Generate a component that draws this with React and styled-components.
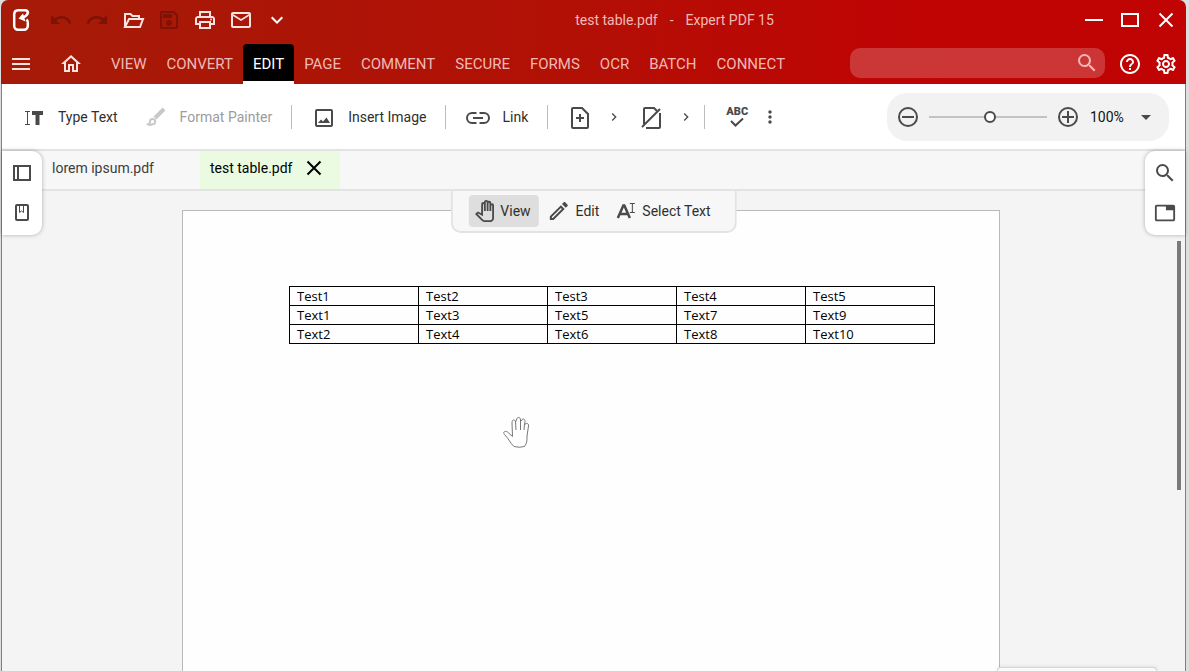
import React, { useState } from 'react';
import styled, { createGlobalStyle, ThemeProvider } from 'styled-components';
import {
    MdMenu,
    MdUndo,
    MdRedo,
    MdOutlineSave,
    MdOutlinePrint,
    MdMailOutline,
    MdExpandMore,
    MdSearch,
    MdHelpOutline,
    MdOutlineSettings,
    MdMoreVert,
    MdChevronRight,
    MdArrowDropDown,
    MdOutlinePanTool,
    MdOutlineEdit,
    MdOutlineTab,
} from 'react-icons/md';

const theme = {
    text: '#2f2f2f',
    icon: '#4a4a4a',
    disabled: '#9c9c9c',
    line: '#e3e3e3',
    bar: '#f7f7f7',
    canvas: '#f4f4f4',
    tabActive: '#eafbe1',
    headerText: '#f0b9b5',
    headerIcon: '#fbe3e1',
};

const GlobalStyle = createGlobalStyle`
  * {
    box-sizing: border-box;
  }

  body {
    margin: 0;
    background: #dedede;
    font-family: Roboto, sans-serif;
    font-size: 14px;
    color: ${props => props.theme.text};
  }

  button, input, select {
    font: inherit;
    color: inherit;
    margin: 0;
    padding: 0;
    border: none;
    background: none;
  }

  svg {
    display: block;
    flex: none;
  }
`;

const Window = styled.div`
  display: flex;
  flex-direction: column;
  min-height: 100vh;
  margin: 0 3px 0 1px;
`;

const Header = styled.header`
  background: linear-gradient(90deg, #a51b08 0%, #b30f05 50%, #bf0404 75%, #c00303 100%);
  border-radius: 7px 7px 0 0;
  color: ${props => props.theme.headerText};
`;

const TitleBar = styled.div`
  display: flex;
  align-items: center;
  height: 40px;
  padding: 0 2px 0 11px;
`;

const QuickActions = styled.div`
  display: flex;
  gap: 12px;
  margin-left: 19px;
`;

const IconButton = styled.button`
  display: flex;
  align-items: center;
  justify-content: center;
  width: ${props => props.$width || 24}px;
  height: 24px;
  color: ${props => props.$color || props.theme.icon};
`;

const Title = styled.h1`
  display: flex;
  flex: 1;
  justify-content: center;
  gap: 12px;
  margin: 0;
  padding-right: 16px;
  font-size: 14px;
  line-height: 20px;
  font-weight: 400;
`;

const WindowControls = styled.div`
  display: flex;
`;

const MenuBar = styled.nav`
  display: flex;
  align-items: center;
  height: 44px;
  padding: 4px 8px 0;
`;

const MenuTabs = styled.div`
  display: flex;
  margin-left: 4px;
`;

const MenuTab = styled.button`
  height: 40px;
  padding: 2px 10px 0;
  font-size: 15px;
  border-bottom: 3px solid ${props => (props.$active ? '#fff' : 'transparent')};
  border-radius: 4px 4px 0 0;
  color: ${props => (props.$active ? '#fff' : 'inherit')};
  background: ${props => (props.$active ? '#000' : 'none')};
  background-clip: padding-box;
`;

const SearchBox = styled.label`
  display: flex;
  align-items: center;
  width: 255px;
  height: 30px;
  margin: 0 13px 2px auto;
  padding: 0 6px 0 12px;
  border-radius: 10px;
  background: rgba(255, 255, 255, 0.2);

  input {
    flex: 1;
    min-width: 0;
    outline: none;
  }
`;

const HeaderIcons = styled.div`
  display: flex;
  gap: 12px;
`;

const Body = styled.div`
  display: flex;
  flex: 1;
  flex-direction: column;
  border: 1px solid #808080;
  border-width: 0 1px;
`;

const Toolbar = styled.div`
  display: flex;
  align-items: center;
  height: 67px;
  padding: 0 16px 0 20px;
  border-bottom: 2px solid ${props => props.theme.line};
  background: #fff;
`;

const ToolButton = styled.button`
  display: flex;
  align-items: center;
  gap: 12px;
  height: 32px;
  margin-right: ${props => (props.$last ? 19 : 26)}px;
  color: ${props => props.theme.text};
  white-space: nowrap;

  svg {
    color: ${props => props.theme.icon};
  }

  &:disabled {
    color: ${props => props.theme.disabled};
  }

  &:disabled svg {
    color: #c8c8c8;
  }
`;

const Divider = styled.span`
  width: 1px;
  height: 24px;
  margin-right: 20px;
  background: #bdbdbd;
`;

const PageTools = styled.div`
  display: flex;
  gap: 16px;
  margin-right: 8px;
`;

const SplitButton = styled.div`
  display: flex;
  gap: 12px;
`;

const SpellCheck = styled.button`
  display: flex;
  flex-direction: column;
  align-items: center;
  width: 24px;
  margin-right: 9px;
  font-size: 11px;
  line-height: 11px;
  font-weight: 900;
  color: ${props => props.theme.icon};
`;

const ZoomBar = styled.div`
  display: flex;
  align-items: center;
  height: 48px;
  margin-left: auto;
  padding: 0 11px 0 9px;
  border-radius: 20px;
  background: #f2f2f2;
`;

const ZoomSlider = styled.input.attrs({ type: 'range' })`
  appearance: none;
  width: 118px;
  height: 12px;
  margin: 0 9px;

  &::-webkit-slider-runnable-track {
    height: 2px;
    background: #c3c3c3;
  }

  &::-webkit-slider-thumb {
    appearance: none;
    width: 12px;
    height: 12px;
    margin-top: -5px;
    border: 2px solid #4a4a4a;
    border-radius: 50%;
    background: #fff;
  }
`;

const ZoomLevel = styled.label`
  display: flex;
  align-items: center;
  margin-left: 10px;
  color: #111;

  select {
    appearance: none;
    width: 44px;
    outline: none;
  }
`;

const Workspace = styled.main`
  position: relative;
  display: flex;
  flex: 1;
  flex-direction: column;
  background: ${props => props.theme.canvas};
`;

const FileTabs = styled.div`
  display: flex;
  height: 40px;
  padding-left: 40px;
  border-bottom: 2px solid ${props => props.theme.line};
  background: ${props => props.theme.bar};
`;

const FileTab = styled.div`
  display: flex;
  align-items: center;
  gap: 12px;
  min-width: ${props => (props.$active ? 140 : 158)}px;
  padding: 0 0 4px 10px;
  color: ${props => (props.$active ? '#000' : '#3d3d3d')};
  background: ${props => (props.$active ? props.theme.tabActive : 'none')};
`;

// Panels docked over the left and right edge of the document
const Dock = styled.aside`
  position: absolute;
  top: 0;
  ${props => props.$side}: 0;
  display: flex;
  flex-direction: column;
  align-items: center;
  gap: 16px;
  width: 40px;
  padding: 10px 0;
  border-radius: ${props => (props.$side === 'left' ? '0 10px 10px 0' : '10px 0 0 10px')};
  background: #fff;
  box-shadow: 0 0 4px rgba(0, 0, 0, 0.3);
`;

const Canvas = styled.div`
  position: relative;
  display: flex;
  flex: 1;
  justify-content: center;
  padding: 19px 5px 0 0;
`;

const ModeBar = styled.div`
  position: absolute;
  top: 0;
  left: 50%;
  transform: translateX(-50%);
  display: flex;
  gap: 3px;
  padding: 4px 16px;
  border: 2px solid ${props => props.theme.line};
  border-top: none;
  border-radius: 0 0 10px 10px;
  background: ${props => props.theme.bar};
`;

const ModeButton = styled.button`
  display: flex;
  align-items: center;
  gap: 5px;
  height: 32px;
  padding: 0 8px 0 5px;
  border-radius: 4px;
  white-space: nowrap;
  background: ${props => (props.$active ? '#dedede' : 'none')};

  svg {
    color: ${props => props.theme.icon};
  }
`;

const Page = styled.article`
  position: relative;
  width: 818px;
  padding: 75px 64px 0 106px;
  border: 1px solid #b9b9b9;
  border-bottom: none;
  background: #fefefe;
`;

const DocTable = styled.table`
  width: 100%;
  table-layout: fixed;
  border-collapse: collapse;
  font-family: 'Open Sans', sans-serif;
  font-size: 13px;
  line-height: 18px;
  color: #000;

  td {
    padding: 0 7px;
    border: 1px solid #000;
  }
`;

const HandCursor = styled.svg`
  position: absolute;
  top: 205px;
  left: 319px;
`;

const ScrollThumb = styled.div`
  position: absolute;
  top: 50px;
  right: 4px;
  width: 4px;
  height: 249px;
  background: #7a7a7a;
`;

const BottomPanel = styled.div`
  position: absolute;
  right: 28px;
  bottom: 0;
  width: 160px;
  height: 4px;
  border: 1px solid #d6d6d6;
  border-bottom: none;
  border-radius: 8px 8px 0 0;
  background: #fafafa;
  box-shadow: 0 0 4px rgba(0, 0, 0, 0.12);
`;

const Logo = () => (
    <svg width="18" height="24" viewBox="0 0 18 24" fill="none" stroke="#fff" strokeWidth="2.5">
        <path d="M16 5.5V5A3 3 0 0 0 13 2.2H6A4 4 0 0 0 2.2 6V17.800A4 4 0 0 0 6 21.800H12A4 4 0 0 0 15.800 17.800V14.500Q15.800 12.500 14.500 11.500" />
        <path d="M16 5Q14.500 8.500 10.500 9.500" strokeWidth="2.5" />
        <path d="M6.500 10.500L11 5.500L13.500 13.500Z" fill="#fff" stroke="none" />
    </svg>
);

const FolderIcon = () => (
    <svg width="24" height="24" viewBox="0 0 24 24" fill="none" stroke="currentColor" strokeWidth="2">
        <path d="M4 19V6H9.500L11.500 8H18V11" />
        <path d="M4 19L8 11H22L19 19Z" />
    </svg>
);

const HomeIcon = () => (
    <svg width="24" height="24" viewBox="0 0 24 24" fill="currentColor">
        <path d="M12 5.7L17 10.2V18H15V12H9V18H7V10.2L12 5.7M12 3L2 12H5V20H11V14H13V20H19V12H22Z" />
    </svg>
);

const MinimizeIcon = () => (
    <svg width="18" height="18" viewBox="0 0 18 18" stroke="#fff" strokeWidth="2">
        <path d="M0 9H18" />
    </svg>
);

const MaximizeIcon = () => (
    <svg width="18" height="18" viewBox="0 0 18 18" fill="none" stroke="#fff" strokeWidth="2">
        <path d="M1 3H17V15H1Z" />
    </svg>
);

const CloseIcon = () => (
    <svg width="18" height="18" viewBox="0 0 18 18" fill="none" stroke="currentColor" strokeWidth="2">
        <path d="M2.500 2.500L15.500 15.500M15.500 2.500L2.500 15.500" />
    </svg>
);

const TypeTextIcon = () => (
    <svg width="24" height="24" viewBox="0 0 24 24" fill="none" stroke="currentColor">
        <path d="M3 6.500H8M5.500 6.500V19.500M3 19.500H8" />
        <path d="M10 8H21M15.500 8V20" strokeWidth="4" />
    </svg>
);

const PainterIcon = () => (
    <svg width="24" height="24" viewBox="0 0 24 24" fill="none" stroke="currentColor">
        <path d="M11 13L20 4" strokeWidth="4" />
        <path d="M4 19.500Q6 19 6 16.500A2.600 2.600 0 1 1 8.500 19.200Q6 20.800 4 19.500Z" strokeWidth="2" />
    </svg>
);

const ImageIcon = () => (
    <svg width="24" height="24" viewBox="0 0 24 24" fill="none" stroke="currentColor" strokeWidth="2">
        <rect x="4" y="5" width="16" height="16" rx="1" />
        <path d="M6 18L9 14.500L11 16.500L14.500 12.500L18 18Z" fill="currentColor" stroke="none" />
    </svg>
);

const LinkIcon = () => (
    <svg width="24" height="24" viewBox="0 0 24 24" fill="none" stroke="currentColor" strokeWidth="2">
        <path d="M10.500 8H6A5 5 0 0 0 6 18H10.500M13.500 8H18A5 5 0 0 1 18 18H13.500M7 13H17" />
    </svg>
);

const AddPageIcon = () => (
    <svg width="24" height="24" viewBox="0 0 24 24" fill="none" stroke="currentColor" strokeWidth="2">
        <path d="M5 3H14L20 9V22A1 1 0 0 1 19 23H5A1 1 0 0 1 4 22V4A1 1 0 0 1 5 3Z" />
        <path d="M12 9V17M8 13H16" />
    </svg>
);

const NoPageIcon = () => (
    <svg width="24" height="24" viewBox="0 0 24 24" fill="none" stroke="currentColor" strokeWidth="2">
        <path d="M4 19V4A1 1 0 0 1 5 3H14L17 6M20 8V22A1 1 0 0 1 19 23H6" />
        <path d="M2 22L20 4" />
    </svg>
);

const MinusIcon = () => (
    <svg width="24" height="24" viewBox="0 0 24 24" fill="none" stroke="currentColor" strokeWidth="2">
        <circle cx="12" cy="12" r="9" />
        <path d="M6 12H18" />
    </svg>
);

const PlusIcon = () => (
    <svg width="24" height="24" viewBox="0 0 24 24" fill="none" stroke="currentColor" strokeWidth="2">
        <circle cx="12" cy="12" r="9" />
        <path d="M6 12H18M12 6V18" />
    </svg>
);

const PanelIcon = () => (
    <svg width="18" height="18" viewBox="0 0 18 18" fill="none" stroke="currentColor" strokeWidth="2">
        <path d="M1 2H17V16H1ZM5 2V16" />
    </svg>
);

const BookmarkIcon = () => (
    <svg width="18" height="18" viewBox="0 0 18 18" fill="none" stroke="currentColor" strokeWidth="2">
        <rect x="3" y="1" width="12" height="15" rx="1" />
        <path d="M6.500 2V8.500L8.500 7L10.500 8.500V2" strokeWidth="1" />
    </svg>
);

const SelectTextIcon = () => (
    <svg width="22" height="20" viewBox="-1 0 22 20" fill="none" stroke="currentColor">
        <path d="M2 17L7.500 4.500H8.500L14 17M4 13H12" strokeWidth="2.500" />
        <path d="M14 2.500H19M16.500 2.500V11.500M14 11.500H19" />
    </svg>
);

const menus = ['VIEW', 'CONVERT', 'EDIT', 'PAGE', 'COMMENT', 'SECURE', 'FORMS', 'OCR', 'BATCH', 'CONNECT'];

const rows = [
    ['Test1', 'Test2', 'Test3', 'Test4', 'Test5'],
    ['Text1', 'Text3', 'Text5', 'Text7', 'Text9'],
    ['Text2', 'Text4', 'Text6', 'Text8', 'Text10'],
];

const App = () => {
    const [menu, setMenu] = useState('EDIT');
    const [mode, setMode] = useState('View');
    const [zoom, setZoom] = useState(52);

    return (
        <ThemeProvider theme={theme}>
            <GlobalStyle />
            <Window>
                <Header>
                    <TitleBar>
                        <Logo />
                        <QuickActions>
                            <IconButton $color="#7d1206" aria-label="Undo"><MdUndo size={24} /></IconButton>
                            <IconButton $color="#7d1206" aria-label="Redo"><MdRedo size={24} /></IconButton>
                            <IconButton $color={theme.headerIcon} aria-label="Open"><FolderIcon /></IconButton>
                            <IconButton $color="#7d1206" aria-label="Save"><MdOutlineSave size={24} /></IconButton>
                            <IconButton $color={theme.headerIcon} aria-label="Print"><MdOutlinePrint size={24} /></IconButton>
                            <IconButton $color={theme.headerIcon} aria-label="Mail"><MdMailOutline size={24} /></IconButton>
                            <IconButton $color="#fff" aria-label="More actions"><MdExpandMore size={24} /></IconButton>
                        </QuickActions>
                        <Title>
                            <span>test table.pdf</span>
                            <span>-</span>
                            <span>Expert PDF 15</span>
                        </Title>
                        <WindowControls>
                            <IconButton $width={36} $color="#fff" aria-label="Minimize"><MinimizeIcon /></IconButton>
                            <IconButton $width={36} $color="#fff" aria-label="Maximize"><MaximizeIcon /></IconButton>
                            <IconButton $width={36} $color="#fff" aria-label="Close"><CloseIcon /></IconButton>
                        </WindowControls>
                    </TitleBar>
                    <MenuBar>
                        <HeaderIcons>
                            <IconButton $color={theme.headerIcon} aria-label="Menu"><MdMenu size={24} /></IconButton>
                            <IconButton $width={52} $color={theme.headerIcon} aria-label="Home"><HomeIcon /></IconButton>
                        </HeaderIcons>
                        <MenuTabs>
                            {menus.map(name => (
                                <MenuTab key={name} $active={menu === name} onClick={() => setMenu(name)}>
                                    {name}
                                </MenuTab>
                            ))}
                        </MenuTabs>
                        <SearchBox>
                            <input type="text" aria-label="Search" />
                            <MdSearch size={24} color={theme.headerText} />
                        </SearchBox>
                        <HeaderIcons>
                            <IconButton $color="#fff" aria-label="Help"><MdHelpOutline size={24} /></IconButton>
                            <IconButton $color="#fff" aria-label="Settings"><MdOutlineSettings size={24} /></IconButton>
                        </HeaderIcons>
                    </MenuBar>
                </Header>

                <Body>
                    <Toolbar>
                        <ToolButton><TypeTextIcon />Type Text</ToolButton>
                        <ToolButton disabled $last><PainterIcon />Format Painter</ToolButton>
                        <Divider />
                        <ToolButton $last><ImageIcon />Insert Image</ToolButton>
                        <Divider />
                        <ToolButton $last><LinkIcon />Link</ToolButton>
                        <Divider />
                        <PageTools>
                            <SplitButton>
                                <IconButton aria-label="Add page"><AddPageIcon /></IconButton>
                                <IconButton $width={20} aria-label="Add page options"><MdChevronRight size={16} /></IconButton>
                            </SplitButton>
                            <SplitButton>
                                <IconButton aria-label="Remove page"><NoPageIcon /></IconButton>
                                <IconButton $width={20} aria-label="Remove page options"><MdChevronRight size={16} /></IconButton>
                            </SplitButton>
                        </PageTools>
                        <Divider />
                        <SpellCheck>
                            ABC
                            <svg width="16" height="10" viewBox="0 0 16 10" fill="none" stroke="currentColor" strokeWidth="2">
                                <path d="M2 4L6.500 8.500L14 1.500" />
                            </svg>
                        </SpellCheck>
                        <IconButton aria-label="More tools"><MdMoreVert size={20} /></IconButton>
                        <ZoomBar>
                            <IconButton aria-label="Zoom out"><MinusIcon /></IconButton>
                            <ZoomSlider aria-label="Zoom" value={zoom} onChange={e => setZoom(e.target.value)} />
                            <IconButton aria-label="Zoom in"><PlusIcon /></IconButton>
                            <ZoomLevel>
                                <select aria-label="Zoom level" defaultValue="100%">
                                    <option>100%</option>
                                </select>
                                <MdArrowDropDown size={24} color={theme.icon} />
                            </ZoomLevel>
                        </ZoomBar>
                    </Toolbar>

                    <Workspace>
                        <FileTabs>
                            <FileTab>lorem ipsum.pdf</FileTab>
                            <FileTab $active>
                                test table.pdf
                                <IconButton $width={20} $color="#000" aria-label="Close tab"><CloseIcon /></IconButton>
                            </FileTab>
                        </FileTabs>
                        <Canvas>
                            <Page>
                                <DocTable>
                                    <tbody>
                                        {rows.map(row => (
                                            <tr key={row[0]}>
                                                {row.map(cell => <td key={cell}>{cell}</td>)}
                                            </tr>
                                        ))}
                                    </tbody>
                                </DocTable>
                                <HandCursor width="30" height="32" viewBox="0 0 30 32" fill="#fff" stroke="#777">
                                    <path d="M12 30.500C8 27 7 23 2.500 18.500C0.500 16 3 14.500 5.500 16L10.500 20.500L10 7C10 3 13 3 13.500 6L14.500 4C15 0.500 18.500 0.500 18.500 4L19.500 5C20 2 23 2.500 23 5.500L22.500 9C23.500 6.500 27 7 26.500 10L25 20C25 25 25 27 22.500 30.500Q17 32 12 30.500Z" />
                                    <path d="M13.500 6L14 14M18.500 4V14M22.500 8L22 14" fill="none" />
                                </HandCursor>
                            </Page>
                            <ModeBar>
                                <ModeButton $active={mode === 'View'} onClick={() => setMode('View')}>
                                    <MdOutlinePanTool size={22} />View
                                </ModeButton>
                                <ModeButton $active={mode === 'Edit'} onClick={() => setMode('Edit')}>
                                    <MdOutlineEdit size={24} />Edit
                                </ModeButton>
                                <ModeButton $active={mode === 'Select'} onClick={() => setMode('Select')}>
                                    <SelectTextIcon />Select Text
                                </ModeButton>
                            </ModeBar>
                            <ScrollThumb />
                            <BottomPanel />
                        </Canvas>
                        <Dock $side="left">
                            <IconButton aria-label="Thumbnails"><PanelIcon /></IconButton>
                            <IconButton aria-label="Bookmarks"><BookmarkIcon /></IconButton>
                        </Dock>
                        <Dock $side="right">
                            <IconButton aria-label="Find"><MdSearch size={24} /></IconButton>
                            <IconButton aria-label="Properties"><MdOutlineTab size={22} /></IconButton>
                        </Dock>
                    </Workspace>
                </Body>
            </Window>
        </ThemeProvider>
    );
};

export default App;
